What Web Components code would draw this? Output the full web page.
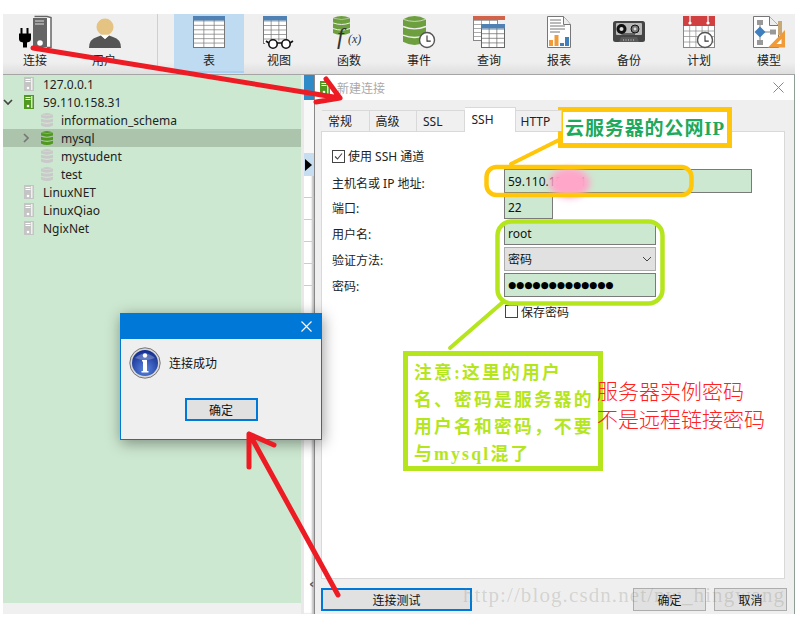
<!DOCTYPE html>
<html>
<head>
<meta charset="utf-8">
<style>
html, body { margin: 0; background: #fff; }
body { font: 12px "Noto Sans", "Noto Sans CJK SC", sans-serif; color: #222; }
</style>
</head>
<body>
<app-window></app-window>
<msg-box></msg-box>
<mark-layer></mark-layer>
<script>
// db cylinder, used by the toolbar and by the tree
const dbStack = (x, y, w, h, col, gapCol, gap = 1) => {
  const ry = Math.max(1.5, h * .11), r = x + w, b = y + h;
  const sep = [1, 2].map((i) => {
    const sy = y + ry * .6 + (h - ry) * i / 3;
    return `<path d="M${x} ${sy}q${w / 2} ${ry * 1.5} ${w} 0" fill="none" stroke="${gapCol}" stroke-width="${gap}"/>`;
  }).join('');
  return `<path d="M${x} ${y + ry}q${w / 2} ${-ry * 2} ${w} 0V${b - ry}q${-w / 2} ${ry * 2} ${-w} 0z" fill="${col}"/>
    <path d="M${x} ${y + ry}q${w / 2} ${ry * 1.4} ${w} 0" fill="none" stroke="${gapCol}" stroke-width="${gap * .7}" opacity=".7"/>${sep}`;
};
const clock = (cx, cy, r) => `<circle cx="${cx}" cy="${cy}" r="${r}" fill="#fff" stroke="#555" stroke-width="1.4"/>
  <path d="M${cx} ${cy - r * .6}V${cy + r * .15}H${cx + r * .5}" fill="none" stroke="#333" stroke-width="1.1"/>`;
const grid = (x, y, w, h, cols, rows, stroke) => {
  let out = `<rect x="${x}" y="${y}" width="${w}" height="${h}" fill="#fff" stroke="${stroke}"/>`;
  for (let i = 1; i < cols; i++) out += `<path d="M${x + w * i / cols} ${y}v${h}" stroke="${stroke}" stroke-width=".7"/>`;
  for (let i = 1; i < rows; i++) out += `<path d="M${x} ${y + h * i / rows}h${w}" stroke="${stroke}" stroke-width=".7"/>`;
  return out;
};

const TOOL_ICONS = {
  connect: `<path d="M19.5 1.5h12.5l4 1v30h-4" fill="#fff" stroke="#666" stroke-width="1.5"/>
    <rect x="18" y="3" width="14" height="29" fill="#666"/>
    <path d="M20 6h9M20 9h9" stroke="#ddd"/><circle cx="25" cy="28" r="2.8" fill="#fff"/>
    <path d="M6.5 13v6M12.5 13v6" stroke="#000" stroke-width="2"/>
    <path d="M4 18.5h12v5.5q0 3-4 3.5v5h-4v-5q-4-.5-4-3.5z" fill="#000"/>`,
  user: `<circle cx="21" cy="12" r="8.5" fill="#e5c483"/>
    <path d="M5 33q0-9 8-11l4-1.5 4 3.5 4-3.5 4 1.5q8 2 8 11z" fill="#555"/>
    <path d="M17 20.5l4 3.5 4-3.5-1-.8h-6z" fill="#fff"/>`,
  table: `${grid(4.5, 1.5, 31, 31, 3, 7, '#777')}<rect x="4" y="1" width="32" height="4.5" fill="#4f81b5"/>`,
  view: `${grid(4.5, 1.5, 23, 27, 3, 6, '#777')}<rect x="4" y="1" width="24" height="4.5" fill="#4f81b5"/>
    <rect x="6" y="26" width="30" height="9" fill="#efefef"/>
    <circle cx="14" cy="29" r="4.2" fill="#fff" stroke="#111" stroke-width="1.6"/>
    <circle cx="27" cy="29" r="4.2" fill="#fff" stroke="#111" stroke-width="1.6"/>
    <path d="M18 28h5M9.8 28L7 26M31 28l3-2" stroke="#111" stroke-width="1.6"/>`,
  func: `${dbStack(4, 1, 17, 19, '#6d9f3f', '#efefef')}
    <text x="8" y="29" font-family="Liberation Serif" font-style="italic" font-size="24" fill="#333">f</text>
    <text x="19" y="28" font-family="Liberation Serif" font-style="italic" font-size="12" fill="#333">(x)</text>`,
  event: `${dbStack(4, 1, 23, 29, '#6d9f3f', '#efefef', 1.4)}${clock(28, 25, 7.5)}`,
  query: `${grid(4.5, 1.5, 24, 24, 3, 6, '#888')}<rect x="4" y="1" width="32" height="4" fill="#d0634a"/>
    ${grid(12.5, 9.5, 23, 23, 3, 5, '#666')}<rect x="12" y="9" width="24" height="4.5" fill="#4f81b5"/>`,
  report: `<path d="M8.5 1.5h16l7 8v23h-23z" fill="#fff" stroke="#777"/>
    <path d="M24.5 1.5v8h7" fill="#eee" stroke="#777"/>
    <path d="M11 5h11M11 8h11M11 11h15M11 14h15M11 17h10" stroke="#666" stroke-width=".9"/>
    <rect x="10" y="25" width="4" height="6" fill="#f19b38"/><rect x="15.5" y="20" width="4" height="11" fill="#f19b38"/>
    <rect x="21" y="28" width="4" height="3" fill="#3f7fbd"/><rect x="26" y="22" width="4" height="9" fill="#3f7fbd"/>`,
  backup: `<rect x="4" y="6" width="32" height="21" rx="2.5" fill="#454545"/>
    <rect x="7" y="8" width="26" height="12" rx="1" fill="#b9b9b9"/>
    <circle cx="12.5" cy="14" r="5" fill="#111"/><circle cx="12.5" cy="14" r="2" fill="#ddd"/>
    <circle cx="26" cy="14" r="4" fill="#777" stroke="#111"/><circle cx="26" cy="14" r="1.4" fill="#ddd"/>
    <path d="M12.5 19H26" stroke="#111"/>
    <path d="M10 27l2-5h16l2 5z" fill="#5a5a5a"/><path d="M14 25h12" stroke="#ccc" stroke-dasharray="1 1.5"/>`,
  plan: `${grid(4.5, 10.5, 31, 22, 5, 4, '#888')}<rect x="4" y="1" width="32" height="10" fill="#d04040"/>
    <path d="M11 1v7M29 1v7" stroke="#fff" stroke-width="1.2"/>
    <circle cx="11" cy="8" r="1.6" fill="#fff"/><circle cx="29" cy="8" r="1.6" fill="#fff"/>${clock(26, 25, 7.5)}`,
  model: `<path d="M4.5 1.5h16l9 9v22h-25z" fill="#fff" stroke="#777"/>
    <path d="M20.5 1.5v9h9" fill="#eee" stroke="#777"/>
    <path d="M11 9v19M11 17h15" stroke="#888"/>
    <rect x="8" y="5" width="6" height="5" fill="#999"/><rect x="8" y="25" width="6" height="5" fill="#999"/>
    <rect x="21" y="14.500" width="6" height="5" fill="#999"/>
    <path d="M11 11.500l5.500 5.500-5.500 5.500-5.500-5.500z" fill="#3f7fbd"/>
    <rect x="29" y="6" width="4" height="14" fill="#c9a878"/>
    <path d="M36 15v17.500H19z" fill="#f19b38"/><path d="M32.500 24v5h-5z" fill="#fff"/>`
};

class ToolItem extends HTMLElement {
  connectedCallback() {
    const root = this.attachShadow({mode: 'open'});
    root.innerHTML = `
<style>
:host { display: flex; flex-direction: column; align-items: center; width: var(--w, 70px); height: 59px; flex: none; }
:host([active]) { background: #bfdbf2; border-bottom: 2px solid #a9d0f0; height: 57px; }
svg { width: 40px; height: 36px; margin-top: 1px; display: block; }
span { font-size: 12px; line-height: 16px; margin-top: 2px; color: #222; }
</style>
<svg viewBox="0 0 40 36">${TOOL_ICONS[this.getAttribute('icon')]}</svg>
<span>${this.getAttribute('label')}</span>`;
  }
}
customElements.define('tool-item', ToolItem);

class MainToolbar extends HTMLElement {
  connectedCallback() {
    const root = this.attachShadow({mode: 'open'});
    root.innerHTML = `
<style>
:host { display: flex; height: 60px; overflow: hidden; background: linear-gradient(#efefef 0, #efefef 48px, #dedede 60px); border-bottom: 1px solid #a5a5a5; }
.sep { width: 1px; height: 56px; background: #cfcfcf; margin: 0 16px 0 18px; flex: none; }
.conn { --w: 64px; }
.user { margin-left: 2px; }
</style>
<tool-item class="conn" icon="connect" label="连接"></tool-item>
<tool-item class="user" icon="user" label="用户"></tool-item>
<div class="sep"></div>
<tool-item icon="table" label="表" active></tool-item>
<tool-item icon="view" label="视图"></tool-item>
<tool-item icon="func" label="函数"></tool-item>
<tool-item icon="event" label="事件"></tool-item>
<tool-item icon="query" label="查询"></tool-item>
<tool-item icon="report" label="报表"></tool-item>
<tool-item icon="backup" label="备份"></tool-item>
<tool-item icon="plan" label="计划"></tool-item>
<tool-item icon="model" label="模型"></tool-item>`;
  }
}
customElements.define('main-toolbar', MainToolbar);

const SERVER_ICON = (c) => `<svg width="10" height="14" viewBox="0 0 10 14"><rect width="10" height="14" fill="${c}"/>
  <path d="M1.500 2.500h5M1.500 4.500h5" stroke="#fff" stroke-width="1.100"/><rect x="7" y="1" width="1.500" height="12" fill="#fff" opacity=".75"/><circle cx="4" cy="11" r="1.300" fill="#fff"/></svg>`;
const DB_ICON = (c, bg) => `<svg width="12" height="14" viewBox="0 0 12 14">${dbStack(0, 0, 12, 14, c, bg, 1.1)}</svg>`;

class TreeRow extends HTMLElement {
  connectedCallback() {
    const root = this.attachShadow({mode: 'open'});
    const type = this.getAttribute('type');
    const on = this.hasAttribute('open-conn');
    const icon = type === 'db'
      ? DB_ICON(on ? '#4f9a1e' : '#c9c9c9', this.hasAttribute('selected') ? '#acc4ac' : '#cde8d0')
      : SERVER_ICON(on ? '#4f9a1e' : '#c4c4c4');
    const arrow = this.getAttribute('arrow');
    const chev = arrow === 'down' ? '<path d="M1 3l4 4 4-4" />' : arrow === 'right' ? '<path d="M3 1l4 4-4 4" />' : '';
    root.innerHTML = `
<style>
:host { display: flex; align-items: center; height: 18px; position: relative; font-size: 12px; color: #222; }
:host([selected]) { background: #acc4ac; }
.icon { display: flex; flex: none; margin-left: ${type === 'db' ? 38 : 21}px; width: ${type === 'db' ? 20 : 19}px; }
.chev { position: absolute; top: 4px; left: ${type === 'db' ? 18 : 0}px; }
.chev path { fill: none; stroke: ${arrow === 'down' ? '#444' : '#777'}; stroke-width: 1.700; }
</style>
<svg class="chev" width="10" height="10" viewBox="0 0 10 10">${chev}</svg>
<span class="icon">${icon}</span><span><slot></slot></span>`;
  }
}
customElements.define('tree-row', TreeRow);

class ConnTree extends HTMLElement {
  connectedCallback() {
    const root = this.attachShadow({mode: 'open'});
    root.innerHTML = `
<style>
:host { display: block; flex: 1; background: #cde8d0; }
</style>
<tree-row type="server">127.0.0.1</tree-row>
<tree-row type="server" open-conn arrow="down">59.110.158.31</tree-row>
<tree-row type="db">information_schema</tree-row>
<tree-row type="db" open-conn arrow="right" selected>mysql</tree-row>
<tree-row type="db">mystudent</tree-row>
<tree-row type="db">test</tree-row>
<tree-row type="server">LinuxNET</tree-row>
<tree-row type="server">LinuxQiao</tree-row>
<tree-row type="server">NgixNet</tree-row>`;
  }
}
customElements.define('conn-tree', ConnTree);

// thin column between the tree and the dialog
class SideStrip extends HTMLElement {
  connectedCallback() {
    const root = this.attachShadow({mode: 'open'});
    root.innerHTML = `
<style>
:host { display: flex; flex-direction: column; width: 13px; flex: none; background: #fff; border-left: 3px solid #e9e9e9; box-sizing: border-box; box-shadow: inset -2px 0 2px rgba(0,0,0,.25); }
.top { height: 25px; background: #2f8bc8; }
.gap { height: 53px; background: #f8f8f8; }
.cell { height: 23px; background: #c6def0; display: flex; align-items: center; }
.cell svg { margin-left: 1px; }
.line { height: 21px; border-bottom: 1px solid #ccc; flex: none; }
.rest { flex: 1; display: flex; align-items: flex-end; }
.fold { font: 700 13px "DejaVu Sans", sans-serif; color: #555; margin: 0 0 23px 5px; }
</style>
<div class="top"></div><div class="gap"></div>
<div class="cell"><svg width="7" height="12" viewBox="0 0 7 12"><path d="M0 0l7 6-7 6z" fill="#000"/></svg></div>
<div class="line"></div><div class="line"></div><div class="line"></div><div class="line"></div><div class="line"></div>
<div class="rest"><span class="fold">‹</span></div>`;
  }
}
customElements.define('side-strip', SideStrip);

class FormTabs extends HTMLElement {
  connectedCallback() {
    const root = this.attachShadow({mode: 'open'});
    root.innerHTML = `
<style>
:host { display: flex; height: 22px; align-items: flex-end; margin-left: 1px; position: relative; z-index: 1; }
.t { height: 21px; box-sizing: border-box; border: 1px solid #d9d9d9; border-left: 0; border-bottom: 0; background: #f0f0f0; padding-left: 6px; width: 47.500px; font-size: 12px; line-height: 21px; }
.t:first-child { border-left: 1px solid #d9d9d9; width: 47px; padding-left: 5px; }
.on { height: 25px; margin-bottom: -1px; background: #fff; width: 51px; line-height: 23px; padding-left: 7px; }
</style>
<div class="t">常规</div><div class="t">高级</div><div class="t">SSL</div><div class="t on">SSH</div><div class="t" style="width:46px;padding-left:5px">HTTP</div>`;
  }
}
customElements.define('form-tabs', FormTabs);

class SshForm extends HTMLElement {
  connectedCallback() {
    const root = this.attachShadow({mode: 'open'});
    root.innerHTML = `
<style>
:host { display: block; flex: 1; background: #fff; border: 1px solid #d9d9d9; padding: 18px 0 0 10px; font-size: 12px; color: #222; }
.use { display: flex; align-items: center; gap: 3px; height: 13px; margin-bottom: 6px; }
.use span { margin-top: -2px; }
.box { width: 11px; height: 11px; border: 1px solid #444; display: block; flex: none; background: #fff; }
.form { display: grid; grid-template-columns: 172px 248px; grid-auto-rows: 24px; row-gap: 2px; align-items: center; }
.form > span { padding-top: 2px; }
.form > span:first-child { padding-top: 3px; }
.f { height: 24px; box-sizing: border-box; border: 1px solid #7a7a7a; background: #cde8d0; padding: 0 3px; line-height: 23px; font-size: 12px; color: #111; white-space: nowrap; overflow: hidden; }
.w1 { width: 49px; }
.w2 { width: 152px; }
.sel { background: #e1e1e1; border-color: #adadad; display: flex; justify-content: space-between; align-items: center; }
.pw { font: 9.300px/22px "DejaVu Sans", sans-serif; color: #000; padding-left: 3px; }
.save { display: flex; align-items: center; gap: 3px; margin: 8px 0 0 172px; height: 13px; }
.save .box { margin-left: 1px; }
</style>
<div class="use"><svg class="box" viewBox="0 0 11 11"><path d="M2 5.500l2.500 2.500 4.500-5.500" fill="none" stroke="#444" stroke-width="1.100"/></svg><span>使用 SSH 通道</span></div>
<div class="form">
  <span>主机名或 IP 地址:</span><div class="f">59.110.158.31</div>
  <span>端口:</span><div class="f w1">22</div>
  <span>用户名:</span><div class="f w2">root</div>
  <span>验证方法:</span><div class="f w2 sel"><span>密码</span><svg width="10" height="6" viewBox="0 0 10 6"><path d="M1 1l4 4 4-4" fill="none" stroke="#444"/></svg></div>
  <span>密码:</span><div class="f w2 pw">●●●●●●●●●●●●●</div>
</div>
<div class="save"><span class="box"></span><span>保存密码</span></div>`;
  }
}
customElements.define('ssh-form', SshForm);

class WinButton extends HTMLElement {
  connectedCallback() {
    const root = this.attachShadow({mode: 'open'});
    root.innerHTML = `
<style>
:host { display: flex; align-items: center; justify-content: center; box-sizing: border-box; height: 23px; width: 73px; background: #e1e1e1; border: 1px solid #adadad; font-size: 12px; color: #111; }
:host([primary]) { border: 2px solid #0078d7; }
</style>
<slot></slot>`;
  }
}
customElements.define('win-button', WinButton);

class NewConnDialog extends HTMLElement {
  connectedCallback() {
    const root = this.attachShadow({mode: 'open'});
    root.innerHTML = `
<style>
:host { display: flex; flex-direction: column; width: 481px; flex: none; box-sizing: border-box; background: #efefef; border-right: 1px solid #8f9f93; border-left: 1px solid #888; }
.title { height: 25px; background: #fff; display: flex; align-items: center; padding-left: 5px; gap: 7px; color: #aaa; font-size: 12px; flex: none; }
.x { margin-left: auto; margin-right: 10px; }
.body { flex: 1; display: flex; flex-direction: column; padding: 9px 9px 3px 6px; min-height: 0; }
.foot { display: flex; align-items: center; margin-top: 9px; flex: none; height: 23px; }
.foot .test { width: 151px; }
.foot .ok { margin-left: auto; }
.foot .cancel { margin-left: 8px; margin-right: -2px; }
</style>
<div class="title">${SERVER_ICON('#4f9a1e')}<span>新建连接</span>
  <svg class="x" width="11" height="11" viewBox="0 0 11 11"><path d="M.5.500l10 10M10.500.500l-10 10" stroke="#888"/></svg></div>
<div class="body">
  <form-tabs></form-tabs>
  <ssh-form></ssh-form>
  <div class="foot"><win-button class="test" primary>连接测试</win-button><win-button class="ok">确定</win-button><win-button class="cancel">取消</win-button></div>
</div>`;
  }
}
customElements.define('new-conn-dialog', NewConnDialog);

class AppWindow extends HTMLElement {
  connectedCallback() {
    const root = this.attachShadow({mode: 'open'});
    root.innerHTML = `
<style>
:host { display: block; width: 792px; height: 600px; margin: 14px 0 0 3px; background: #efefef; }
.main { display: flex; height: 539px; }
.left { display: flex; flex-direction: column; width: 298px; flex: none; }
.status { height: 11px; background: #f0f0f0; }
</style>
<main-toolbar></main-toolbar>
<div class="main">
  <div class="left"><conn-tree></conn-tree><div class="status"></div></div>
  <side-strip></side-strip>
  <new-conn-dialog></new-conn-dialog>
</div>`;
  }
}
customElements.define('app-window', AppWindow);

class MsgBox extends HTMLElement {
  connectedCallback() {
    const root = this.attachShadow({mode: 'open'});
    root.innerHTML = `
<style>
:host { position: absolute; left: 120px; top: 313px; width: 202px; height: 127px; box-sizing: border-box; background: #efefef; border: 1px solid #0078d7; box-shadow: 1px 3px 14px rgba(0,0,0,.4); display: flex; flex-direction: column; font-size: 12px; color: #111; }
.bar { height: 25px; background: #0078d7; display: flex; justify-content: flex-end; align-items: center; padding-right: 9px; flex: none; }
.msg { display: flex; align-items: center; gap: 8px; padding: 8px 0 0 8px; }
.btn { display: flex; justify-content: center; margin: 19px 0 0 0; }
</style>
<div class="bar"><svg width="11" height="11" viewBox="0 0 11 11"><path d="M.5.500l10 10M10.500.500l-10 10" stroke="#fff" stroke-width="1.100"/></svg></div>
<div class="msg">
  <svg width="32" height="32" viewBox="0 0 32 32">
    <defs><radialGradient id="g" cx=".5" cy=".75" r=".75"><stop offset="0" stop-color="#5b86e0"/><stop offset="1" stop-color="#102a8c"/></radialGradient></defs>
    <circle cx="16" cy="16" r="15.200" fill="#d8d8d8" stroke="#777" stroke-width="1"/>
    <circle cx="16" cy="16" r="13" fill="url(#g)"/>
    <path d="M6 11q10-9 20 0q-10 4-20 0z" fill="#fff" opacity=".25"/>
    <circle cx="16" cy="8.500" r="2.200" fill="#fff"/>
    <path d="M13 13h5v11h1.500v1.500h-7V24H14V14.500h-1z" fill="#fff"/>
  </svg>
  <span>连接成功</span>
</div>
<div class="btn"><win-button primary>确定</win-button></div>`;
  }
}
customElements.define('msg-box', MsgBox);

// the hand-drawn notes on top of the screenshot
class MarkLayer extends HTMLElement {
  connectedCallback() {
    const root = this.attachShadow({mode: 'open'});
    root.innerHTML = `
<style>
:host { position: absolute; left: 0; top: 0; width: 811px; height: 631px; overflow: hidden; pointer-events: none; }
svg { position: absolute; left: 0; top: 0; }
.smear { position: absolute; left: 549px; top: 168px; width: 41px; height: 30px; background: #ffa6c9; border-radius: 50%; filter: blur(3px); }
.note { position: absolute; box-sizing: border-box; background: #fff; font-family: "Liberation Serif", "Noto Sans CJK SC", serif; font-weight: 700; white-space: nowrap; }
.ip { left: 558px; top: 107px; width: 174px; height: 41px; border: 5px solid #ffc60a; color: #1fa95c; font-size: 19px; line-height: 33px; padding-left: 2px; letter-spacing: .9px; }
.warn { left: 403px; top: 351px; width: 200px; height: 120px; border: 5px solid #b5e61d; color: #b5e61d; line-height: 27px; padding: 4px 0 0 6px; font-size: 17.800px; letter-spacing: 2.200px; }
.red { position: absolute; left: 597px; top: 376px; color: #ff2020; font: 300 21px/28px "Noto Sans CJK SC", sans-serif; white-space: nowrap; }
.wm { position: absolute; left: 463px; top: 583px; font: 21px "Liberation Serif", serif; letter-spacing: 1.100px; color: rgba(120,120,110,.24); white-space: nowrap; }
</style>
<div class="smear"></div>
<div class="wm">http://blog.csdn.net/nw_hingwang</div>
<svg width="811" height="631" viewBox="0 0 811 631" fill="none" stroke-linecap="round" stroke-linejoin="round">
  <rect x="486.500" y="167" width="205" height="28" rx="10" stroke="#ffc60a" stroke-width="4.500"/>
  <path d="M559 140L511 164" stroke="#ffc60a" stroke-width="4"/>
  <rect x="497.500" y="221.500" width="165" height="82" rx="14" stroke="#b5e61d" stroke-width="4.500"/>
  <path d="M503 302L450 348" stroke="#b5e61d" stroke-width="4"/>
  <g stroke="#ed1c24" stroke-width="5">
    <path d="M33 48L340 98M326 79L340 98L316 102"/>
    <path d="M338 595L250 435M249 434L274 445M249 434L249 467"/>
  </g>
</svg>
<div class="note ip">云服务器的公网IP</div>
<div class="note warn">注意:这里的用户<br>名、密码是服务器的<br>用户名和密码&#xFF0C;不要<br>与mysql混了</div>
<div class="red">服务器实例密码<br>不是远程链接密码</div>`;
  }
}
customElements.define('mark-layer', MarkLayer);
</script>
</body>
</html>
